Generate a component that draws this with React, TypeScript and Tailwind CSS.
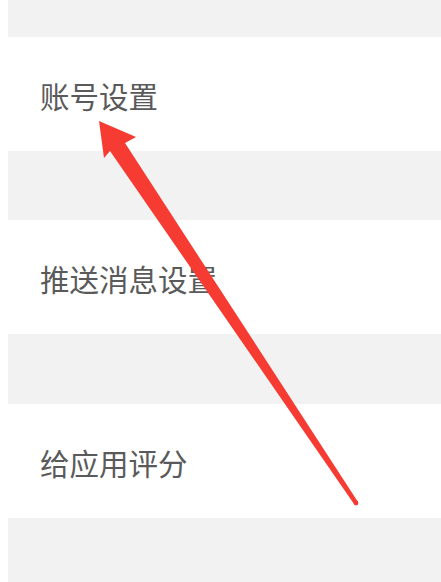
import React from "react";

const rows = ["账号设置", "推送消息设置", "给应用评分"];

export default function App() {
  return (
    <div className="relative w-[441px] h-[582px] bg-white pl-[8px] overflow-hidden" style={{ fontFamily: '"Noto Sans CJK SC", "Noto Sans", sans-serif' }}>
      <div className="flex flex-col h-full bg-[#f2f2f2]">
        <div className="h-[37px]" />
        <div className="h-[114px] bg-white flex items-center pl-[32px] pt-[4px] text-[29.5px] text-[#5a5a5a] leading-none">{rows[0]}</div>
        <div className="h-[69px]" />
        <div className="h-[114px] bg-white flex items-center pl-[32px] pt-[4px] text-[29.5px] text-[#5a5a5a] leading-none">{rows[1]}</div>
        <div className="h-[70px]" />
        <div className="h-[114px] bg-white flex items-center pl-[32px] pt-[4px] text-[29.5px] text-[#5a5a5a] leading-none">{rows[2]}</div>
        <div className="flex-1" />
      </div>
      <svg className="absolute left-0 top-0 pointer-events-none" width="441" height="582" viewBox="0 0 441 582">
        <polygon
          points="99,121 136,137 125,143 358,502 354,504 110,151 104,158"
          fill="#f53b32"
        />
        <circle cx="356" cy="503" r="2.4" fill="#f53b32" />
      </svg>
    </div>
  );
}
